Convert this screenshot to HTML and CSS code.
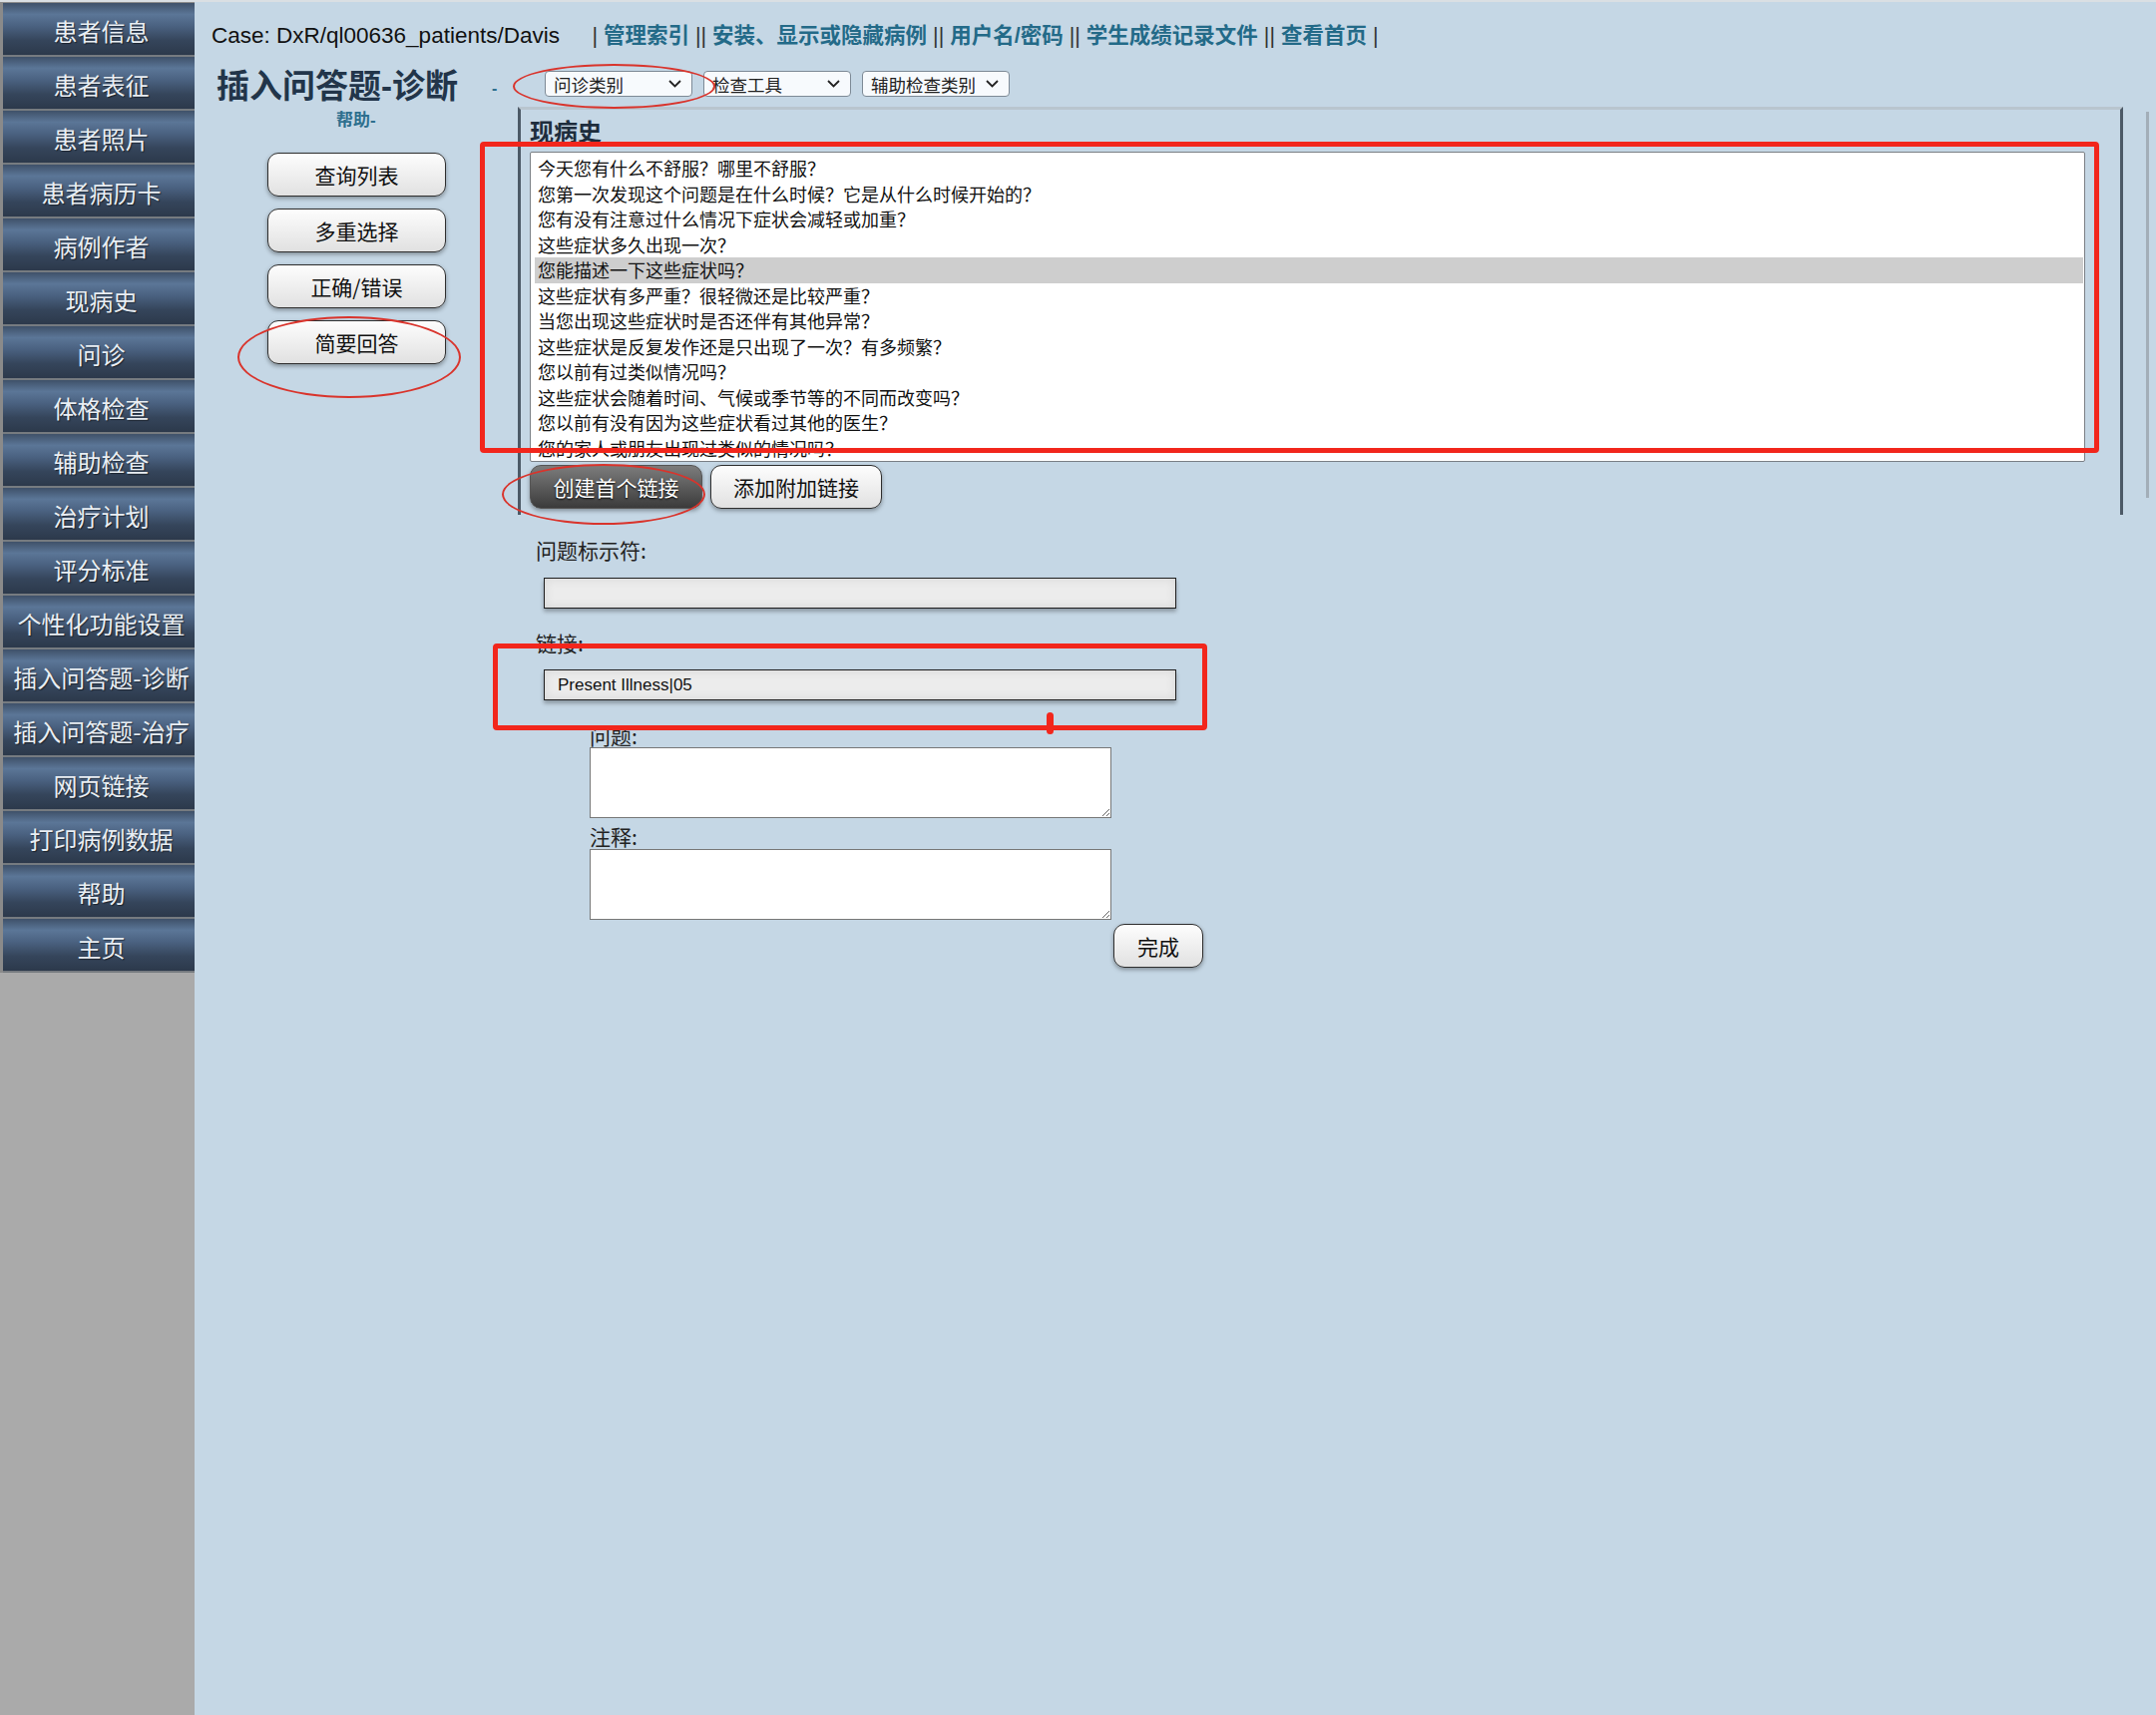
FILE: index.html
```
<!DOCTYPE html>
<html lang="zh-CN">
<head>
    <meta charset="UTF-8">
    <title>插入问答题-诊断</title>
    <link rel="stylesheet" href="styles.css">
</head>
<body>

<div class="sidebar">
    <ul class="nav">
        <li><a href="#">患者信息</a></li>
        <li><a href="#">患者表征</a></li>
        <li><a href="#">患者照片</a></li>
        <li><a href="#">患者病历卡</a></li>
        <li><a href="#">病例作者</a></li>
        <li><a href="#">现病史</a></li>
        <li><a href="#">问诊</a></li>
        <li><a href="#">体格检查</a></li>
        <li><a href="#">辅助检查</a></li>
        <li><a href="#">治疗计划</a></li>
        <li><a href="#">评分标准</a></li>
        <li><a href="#">个性化功能设置</a></li>
        <li><a href="#">插入问答题-诊断</a></li>
        <li><a href="#">插入问答题-治疗</a></li>
        <li><a href="#">网页链接</a></li>
        <li><a href="#">打印病例数据</a></li>
        <li><a href="#">帮助</a></li>
        <li><a href="#">主页</a></li>
    </ul>
</div>

<div class="main">
    <div class="topbar">
        <span class="case">Case: DxR/ql00636_patients/Davis</span>
        <span class="links">| <a href="#">管理索引</a> || <a href="#">安装、显示或隐藏病例</a> || <a href="#">用户名/密码</a> || <a href="#">学生成绩记录文件</a> || <a href="#">查看首页</a> |</span>
    </div>

    <div class="work">
        <div class="left-col">
            <h1 class="title">插入问答题-诊断</h1>
            <a class="help" href="#">帮助-</a>
            <div class="type-buttons">
                <button class="btn type-btn">查询列表</button>
                <button class="btn type-btn">多重选择</button>
                <button class="btn type-btn">正确/错误</button>
                <button class="btn type-btn">简要回答</button>
            </div>
        </div>

        <div class="right-col">
            <div class="toolbar">
                <a class="dash" href="#">-</a>
                <div class="select"><span>问诊类别</span><svg width="13" height="8" viewBox="0 0 13 8"><path d="M1 1 L6.5 6.5 L12 1" fill="none" stroke="#222" stroke-width="1.8"/></svg></div>
                <div class="select"><span>检查工具</span><svg width="13" height="8" viewBox="0 0 13 8"><path d="M1 1 L6.5 6.5 L12 1" fill="none" stroke="#222" stroke-width="1.8"/></svg></div>
                <div class="select"><span>辅助检查类别</span><svg width="13" height="8" viewBox="0 0 13 8"><path d="M1 1 L6.5 6.5 L12 1" fill="none" stroke="#222" stroke-width="1.8"/></svg></div>
            </div>

            <div class="panel-row">
                <div class="panel">
                    <h2>现病史</h2>
                    <div class="listbox">
                        <div class="opt">今天您有什么不舒服？哪里不舒服？</div>
                        <div class="opt">您第一次发现这个问题是在什么时候？它是从什么时候开始的？</div>
                        <div class="opt">您有没有注意过什么情况下症状会减轻或加重？</div>
                        <div class="opt">这些症状多久出现一次？</div>
                        <div class="opt sel">您能描述一下这些症状吗？</div>
                        <div class="opt">这些症状有多严重？很轻微还是比较严重？</div>
                        <div class="opt">当您出现这些症状时是否还伴有其他异常？</div>
                        <div class="opt">这些症状是反复发作还是只出现了一次？有多频繁？</div>
                        <div class="opt">您以前有过类似情况吗？</div>
                        <div class="opt">这些症状会随着时间、气候或季节等的不同而改变吗？</div>
                        <div class="opt">您以前有没有因为这些症状看过其他的医生？</div>
                        <div class="opt">您的家人或朋友出现过类似的情况吗？</div>
                    </div>
                    <div class="link-buttons">
                        <button class="btn dark create-btn">创建首个链接</button>
                        <button class="btn add-btn">添加附加链接</button>
                    </div>
                </div>
                <div class="track"></div>
            </div>

            <div class="form">
                <div class="label">问题标示符:</div>
                <input class="field" type="text" value="">
                <div class="label label-link">链接:</div>
                <input class="field" type="text" value="Present Illness|05">

                <div class="sub-form">
                    <div class="small-label">问题:</div>
                    <textarea class="area"></textarea>
                    <div class="small-label note-label">注释:</div>
                    <textarea class="area note-area"></textarea>
                    <button class="btn done-btn">完成</button>
                </div>
            </div>
        </div>
    </div>
</div>

<!-- 标注 -->
<div class="mark ellipse mark-select"></div>
<div class="mark ellipse mark-short"></div>
<div class="mark ellipse mark-create"></div>
<div class="mark rect mark-list"></div>
<div class="mark rect mark-link"></div>
<div class="mark mark-tick"></div>

</body>
</html>
```

FILE: styles.css
```
body {
    margin: 0;
    padding: 0;
    display: flex;
    min-height: 100vh;
    background-color: #c5d7e5;
    font-family: "Liberation Sans", "Noto Sans CJK SC", sans-serif;
    color: #111;
    border-top: 2px solid #dadfe3;
    box-sizing: border-box;
    position: relative;
}

a {
    text-decoration: none;
}

/* 左侧菜单 */
.sidebar {
    width: 195px;
    flex-shrink: 0;
    background-color: #aaaaaa;
}

.nav {
    list-style: none;
    margin: 0;
    padding: 0;
    border-top: 1px solid #8a8a8a;
    border-left: 3px solid #8a8a8a;
}

.nav li {
    height: 52px;
    border-bottom: 2px solid #767b80;
    background: linear-gradient(to bottom, #3f5169 0%, #5b7697 22%, #4a6180 45%, #35455b 72%, #2c394b 100%);
}

.nav a {
    display: block;
    line-height: 56px;
    height: 52px;
    padding-left: 5px;
    text-align: center;
    color: #e9eef3;
    font-size: 24px;
    font-family: "Noto Sans CJK SC", sans-serif;
    white-space: nowrap;
    text-shadow: 1px 1px 1px rgba(0, 0, 0, 0.5);
}

/* 主体 */
.main {
    flex: 1;
    padding-left: 17px;
}

.topbar {
    padding-top: 19px;
    line-height: 30px;
    white-space: nowrap;
}

.case {
    font-size: 22.5px;
    color: #111;
}

.links {
    margin-left: 28px;
    font-size: 21.5px;
    color: #333;
}

.links a {
    font-weight: bold;
    color: #236a88;
}

.work {
    display: flex;
    margin-top: 12px;
}

.left-col {
    width: 278px;
    flex-shrink: 0;
}

.title {
    margin: 0;
    padding-left: 5px;
    font-size: 33px;
    line-height: 44px;
    color: #22354a;
    white-space: nowrap;
}

.help {
    display: block;
    margin-top: 1px;
    padding-left: 125px;
    font-size: 17px;
    line-height: 22px;
    font-weight: bold;
    color: #2e6f8e;
}

.type-buttons {
    margin-top: 21px;
    margin-left: 56px;
    display: flex;
    flex-direction: column;
    gap: 12px;
}

.btn {
    height: 44px;
    box-sizing: border-box;
    border: 1.5px solid #2e2e2e;
    border-radius: 11px;
    background: linear-gradient(to bottom, #fdfdfd, #e1e1e1);
    box-shadow: 0 2px 4px rgba(0, 0, 0, 0.35);
    font-family: "Noto Sans CJK SC", sans-serif;
    font-size: 21px;
    color: #111;
    padding: 0;
    cursor: pointer;
}

.type-btn {
    width: 179px;
}

.btn.dark {
    border: 1px solid #555;
    background: linear-gradient(to bottom, #7c7c7c, #3b3b3b);
    color: #fff;
    text-shadow: 0 1px 2px #000;
}

.right-col {
    flex: 1;
}

.toolbar {
    display: flex;
    align-items: flex-end;
    margin-top: 6px;
    height: 26px;
    gap: 11px;
}

.dash {
    width: 42px;
    padding-left: 3px;
    font-size: 16px;
    line-height: 16px;
    font-weight: bold;
    color: #2e6f8e;
}

.select {
    width: 148px;
    height: 26px;
    box-sizing: border-box;
    border: 1px solid #7d8a96;
    border-radius: 4px;
    background-color: #f7fafd;
    display: flex;
    align-items: center;
    justify-content: space-between;
    padding: 0 10px 0 8px;
    font-family: "Noto Sans CJK SC", sans-serif;
    font-size: 17.5px;
    color: #222;
}

.panel-row {
    display: flex;
    margin-top: 10px;
}

.panel {
    flex: 1;
    margin-left: 29px;
    border-left: 3px solid #4c5966;
    border-right: 3px solid #4c5966;
    border-top: 3px solid #b9c5cf;
    padding: 6px 0 6px 9px;
}

.panel h2 {
    margin: 0;
    font-size: 24px;
    line-height: 30px;
    color: #1e2d3d;
    font-family: "Noto Sans CJK SC", sans-serif;
}

.listbox {
    margin-top: 6px;
    width: 1559px;
    height: 311px;
    box-sizing: border-box;
    border: 1px solid #7a7f85;
    border-radius: 2px;
    background-color: #fff;
    padding: 3px 1px 0 4px;
    overflow: hidden;
}

.opt {
    height: 25.5px;
    line-height: 25.5px;
    padding-left: 3px;
    font-family: "Noto Sans CJK SC", sans-serif;
    font-size: 18px;
    color: #111;
    white-space: nowrap;
}

.opt.sel {
    background-color: #cecece;
}

.link-buttons {
    display: flex;
    gap: 8px;
    margin-top: 3px;
}

.create-btn {
    width: 173px;
}

.add-btn {
    width: 172px;
}

.track {
    width: 3px;
    height: 387px;
    margin: 5px 7px 0 23px;
    background-color: #a3aeb8;
}

/* 表单 */
.form {
    margin-left: 47px;
}

.label {
    margin-top: 20px;
    font-size: 21px;
    line-height: 30px;
    color: #222;
    font-family: "Noto Sans CJK SC", sans-serif;
}

.label-link {
    margin-top: 19px;
}

.field {
    display: block;
    margin: 13px 0 0 8px;
    width: 634px;
    height: 31px;
    box-sizing: border-box;
    border: 1.5px solid #1f1f1f;
    background-color: #ececec;
    box-shadow: inset 0 0 10px #d4d4d4, 0 3px 4px rgba(0, 0, 0, 0.3);
    padding-left: 13px;
    font-family: "Liberation Sans", sans-serif;
    font-size: 17px;
    color: #111;
}

.label-link + .field {
    margin-top: 12px;
}

.sub-form {
    margin-left: 54px;
    margin-top: 23px;
}

.small-label {
    font-size: 21px;
    line-height: 24px;
    color: #222;
    font-family: "Noto Sans CJK SC", sans-serif;
}

.note-label {
    margin-top: 6px;
}

.area {
    display: block;
    width: 523px;
    height: 71px;
    box-sizing: border-box;
    border: 1px solid #777;
    background-color: #fff;
    margin: 0;
}

.note-area {
    margin-top: 1px;
}

.done-btn {
    display: block;
    width: 90px;
    margin: 4px 0 0 525px;
}

/* 红色标注 */
.mark {
    position: absolute;
    box-sizing: border-box;
    pointer-events: none;
}

.ellipse {
    border: 2.5px solid #d9342c;
    border-radius: 50%;
}

.rect {
    border: 5px solid #f2261c;
    border-radius: 4px;
}

.mark-select {
    left: 514px;
    top: 62px;
    width: 203px;
    height: 45px;
}

.mark-short {
    left: 238px;
    top: 315px;
    width: 224px;
    height: 82px;
}

.mark-create {
    left: 503px;
    top: 463px;
    width: 204px;
    height: 61px;
}

.mark-list {
    left: 481px;
    top: 140px;
    width: 1623px;
    height: 312px;
}

.mark-link {
    left: 494px;
    top: 643px;
    width: 716px;
    height: 87px;
}

.mark-tick {
    left: 1049px;
    top: 712px;
    width: 7px;
    height: 22px;
    border-radius: 4px;
    background-color: #f2261c;
}
```
